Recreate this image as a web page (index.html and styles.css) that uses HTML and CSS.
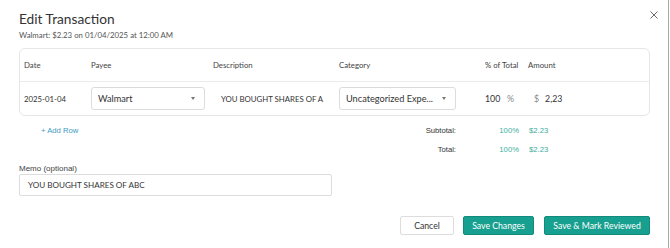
FILE: index.html
```html
<!DOCTYPE html>
<html>
<head>
<meta charset="utf-8">
<link rel="stylesheet" href="styles.css">
</head>
<body>
<div class="modal">
  <button class="close" aria-label="Close">
    <svg width="8" height="8" viewBox="0 0 8 8"><path d="M0.5 0.5L7.5 7.5M7.5 0.5L0.5 7.5" stroke="#6b6b6b" stroke-width="1" fill="none"/></svg>
  </button>
  <h1 class="title">Edit Transaction</h1>
  <div class="subtitle">Walmart: $2.23 on 01/04/2025 at 12:00 AM</div>

  <div class="table">
    <div class="row head">
      <div>Date</div>
      <div>Payee</div>
      <div>Description</div>
      <div>Category</div>
      <div>% of Total</div>
      <div>Amount</div>
    </div>
    <div class="row body">
      <div class="c-date">2025-01-04</div>
      <div class="c-payee"><div class="select select-payee"><span>Walmart</span><i class="caret"></i></div></div>
      <div class="c-desc">YOU BOUGHT SHARES OF A</div>
      <div class="c-cat"><div class="select select-cat"><span>Uncategorized Expe...</span><i class="caret"></i></div></div>
      <div class="c-pct"><span class="pct-val">100</span><span class="unit">%</span></div>
      <div class="c-amt"><span class="unit">$</span><span class="amt-val">2,23</span></div>
    </div>
  </div>

  <div class="under">
    <a class="add-row">+ Add Row</a>
    <div class="totals">
      <div class="tot-row"><span class="tot-label">Subtotal:</span><span class="tot-pct">100%</span><span class="tot-amt">$2.23</span></div>
      <div class="tot-row"><span class="tot-label">Total:</span><span class="tot-pct">100%</span><span class="tot-amt">$2.23</span></div>
    </div>
  </div>

  <div class="memo">
    <label class="memo-label">Memo (optional)</label>
    <div class="memo-input">YOU BOUGHT SHARES OF ABC</div>
  </div>

  <div class="actions">
    <button class="btn btn-cancel">Cancel</button>
    <button class="btn btn-primary btn-save">Save Changes</button>
    <button class="btn btn-primary btn-review">Save &amp; Mark Reviewed</button>
  </div>
</div>
</body>
</html>
```
FILE: styles.css
```css
* { box-sizing: border-box; }
html, body { margin: 0; padding: 0; background: #fff; }
body { font-family: Lato, "Open Sans", sans-serif; color: #333; }

.modal {
  position: relative;
  width: 669px;
  height: 248px;
  border-right: 1px solid #a8a8a8;
  padding: 12px 19px 0 19px;
}

.close {
  position: absolute;
  top: 11px;
  left: 650px;
  padding: 0;
  border: 0;
  background: none;
  width: 8px;
  height: 8px;
  display: block;
}
.close svg { display: block; }

.title {
  margin: 0;
  font-size: 13.7px;
  font-weight: 400;
  line-height: 14px;
  color: #333;
}
.subtitle {
  margin-top: 4px;
  font-size: 7.8px;
  line-height: 10px;
  color: #555;
}

.table {
  margin-top: 8px;
  width: 631px;
  border: 1px solid #e6e6e6;
  border-radius: 6px;
}
.row {
  display: grid;
  grid-template-columns: 67px 122px 126px 146px 43px 1fr;
  align-items: center;
  padding-left: 4px;
  height: 33px;
}
.row.head {
  font-size: 7.8px;
  color: #444;
  border-bottom: 1px solid #ececec;
}
.row.body {
  font-size: 7.8px;
  color: #333;
}
.c-desc { padding-left: 8px; }

.select {
  display: flex;
  align-items: center;
  justify-content: space-between;
  height: 23px;
  border: 1px solid #dcdcdc;
  border-radius: 3px;
  padding: 0 9px 0 6px;
  font-size: 9.2px;
  color: #333;
  white-space: nowrap;
}
.select-payee { width: 114px; }
.select-cat { width: 117px; }
.caret {
  width: 0; height: 0;
  border-left: 2.5px solid transparent;
  border-right: 2.5px solid transparent;
  border-top: 3px solid #777;
}

.c-pct { display: flex; align-items: center; font-size: 8.8px; }
.pct-val { width: 22px; }
.unit { color: #888; }
.c-amt { display: flex; align-items: center; padding-left: 6px; font-size: 8.8px; }
.amt-val { margin-left: 6px; }

.under {
  display: flex;
  width: 631px;
  margin-top: 10px;
}
.add-row {
  margin-left: 22px;
  font-family: "Liberation Sans", Arial, sans-serif;
  font-size: 7.7px;
  color: #3f9bc2;
  line-height: 10px;
  height: 10px;
}
.totals {
  margin-left: auto;
  width: 274px;
  font-family: "Liberation Sans", Arial, sans-serif;
  font-size: 7.7px;
}
.tot-row {
  display: flex;
  align-items: center;
  height: 10px;
  line-height: 10px;
}
.tot-row + .tot-row { margin-top: 9px; }
.tot-label { width: 80px; text-align: right; color: #333; }
.tot-pct { width: 63px; text-align: right; color: #3aae9e; }
.tot-amt { flex: 1; padding-left: 10px; color: #3aae9e; }

.memo { margin-top: 9px; }
.memo-label {
  display: block;
  font-family: "Liberation Sans", Arial, sans-serif;
  font-size: 8px;
  color: #444;
  line-height: 10px;
}
.memo-input {
  margin-top: 0;
  width: 313px;
  height: 22px;
  border: 1px solid #dcdcdc;
  border-radius: 2px;
  padding: 0 8px;
  display: flex;
  align-items: center;
  font-size: 8.1px;
  color: #333;
}

.actions {
  display: flex;
  justify-content: flex-end;
  width: 631px;
  margin-top: 20px;
}
.btn {
  height: 19px;
  padding: 0;
  font-family: Lato, sans-serif;
  font-size: 8.7px;
  border-radius: 2px;
  cursor: pointer;
}
.btn-cancel {
  width: 54px;
  background: #fff;
  border: 1px solid #ddd;
  color: #333;
}
.btn-primary {
  background: #17a08f;
  border: 1px solid #138b7c;
  color: #fff;
}
.btn-save { width: 71px; margin-left: 9px; }
.btn-review { width: 106px; margin-left: 10px; }
```
